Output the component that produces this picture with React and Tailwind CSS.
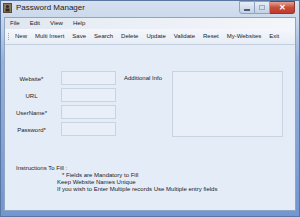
import React from "react";

const menus = ["File", "Edit", "View", "Help"];
const tools = ["New", "Multi Insert", "Save", "Search", "Delete", "Update", "Validate", "Reset", "My-Websites", "Exit"];
const fields = ["Website*", "URL", "UserName*", "Password*"];

function AppIcon() {
  return (
    <svg width="9" height="10" viewBox="0 0 9 10">
      <rect x="0" y="0" width="9" height="10" fill="#5a4a3a" />
      <rect x="1" y="1" width="7" height="8" fill="#8a7a62" />
      <circle cx="4.5" cy="3.5" r="1.6" fill="#2f2a24" />
      <rect x="2.5" y="5.5" width="4" height="3" fill="#2f2a24" />
    </svg>
  );
}

export default function App() {
  return (
    <div
      className="w-[300px] h-[217px] flex flex-col text-[#1b1b1b] bg-[linear-gradient(180deg,#d6e1ef_0px,#cbd9eb_17px,#95b0dc_60px,#7396d1_100%)] border border-[#5a76a3] overflow-hidden"
      style={{ fontFamily: '"Liberation Sans", Arial, sans-serif' }}
    >
      {/* title bar */}
      <div className="h-[16px] flex items-start shrink-0">
        <div className="ml-[2px] mt-[2px]">
          <AppIcon />
        </div>
        <div className="ml-[4px] mt-[2px] text-[8px] leading-[10px] text-[#222]">Password Manager</div>
        <div className="ml-auto mr-[4px] flex">
          <div className="w-[16px] h-[13px] border border-[#8ea2c0] rounded-bl-[3px] bg-[linear-gradient(180deg,#e6edf6,#c3d1e4)] flex items-center justify-center">
            <div className="w-[6px] h-[2px] bg-[#4b5c78] mt-[4px]" />
          </div>
          <div className="w-[15px] h-[13px] border-y border-r border-[#8ea2c0] bg-[linear-gradient(180deg,#e6edf6,#c3d1e4)] flex items-center justify-center">
            <div className="w-[6px] h-[5px] border border-[#9aabc4]" />
          </div>
          <div className="w-[25px] h-[13px] border-y border-r border-[#8b3a32] rounded-br-[3px] bg-[linear-gradient(180deg,#e5a493,#c74d3c_50%,#c23a28)] flex items-center justify-center text-white text-[8px] font-bold leading-none">
            ✕
          </div>
        </div>
      </div>

      {/* client */}
      <div className="flex-1 mx-[3px] mb-[5px] flex flex-col border border-[#8fa5c5] bg-[#e4ecf8] whitespace-nowrap">
        <div className="h-[11px] flex items-center gap-[10px] pl-[5px] text-[6px] bg-[linear-gradient(90deg,#dfe6ef,#e9eef5_30%,#f3f6fa)]">
          {menus.map((m) => (
            <span key={m}>{m}</span>
          ))}
        </div>
        <div className="h-[16px] flex items-center border-b border-[#c3cfdf] bg-[linear-gradient(180deg,#f4f7fb,#e7edf6)] text-[6px]">
          <div className="ml-[3px] mr-[6px] flex flex-col gap-[1px]">
            {[0, 1, 2, 3].map((i) => (
              <div key={i} className="w-[1px] h-[1px] bg-[#9aa8bb]" />
            ))}
          </div>
          <div className="flex items-center gap-[8px]">
            {tools.map((t) => (
              <span key={t}>{t}</span>
            ))}
          </div>
        </div>

        <div className="flex-1 flex flex-col text-[6px]">
          <div className="flex mt-[26px]">
            <div className="flex flex-col w-[41px] ml-[6px]">
              {fields.map((f) => (
                <div key={f} className="h-[17px] flex items-center justify-center">
                  {f}
                </div>
              ))}
            </div>
            <div className="flex flex-col ml-[9px]">
              {fields.map((f) => (
                <div key={f} className="h-[17px]">
                  <div className="w-[55px] h-[14px] border border-[#c9d3e1] bg-[#e8eff9]" />
                </div>
              ))}
            </div>
            <div className="ml-[8px] h-[14px] flex items-center">Additional Info</div>
            <div className="ml-auto mr-[12px] w-[111px] h-[66px] border border-[#c9d3e1] bg-[#e8eff9]" />
          </div>

          <div className="mt-[26px] ml-[11px] leading-[7px]">
            <div>Instructions To Fill :</div>
            <div className="pl-[41px]">
              <div className="pl-[5px]">* Fields are Mandatory to Fill</div>
              <div>Keep Website Names Unique</div>
              <div>If you wish to Enter Multiple records Use Multiple entry fields</div>
            </div>
          </div>
        </div>
      </div>
    </div>
  );
}
